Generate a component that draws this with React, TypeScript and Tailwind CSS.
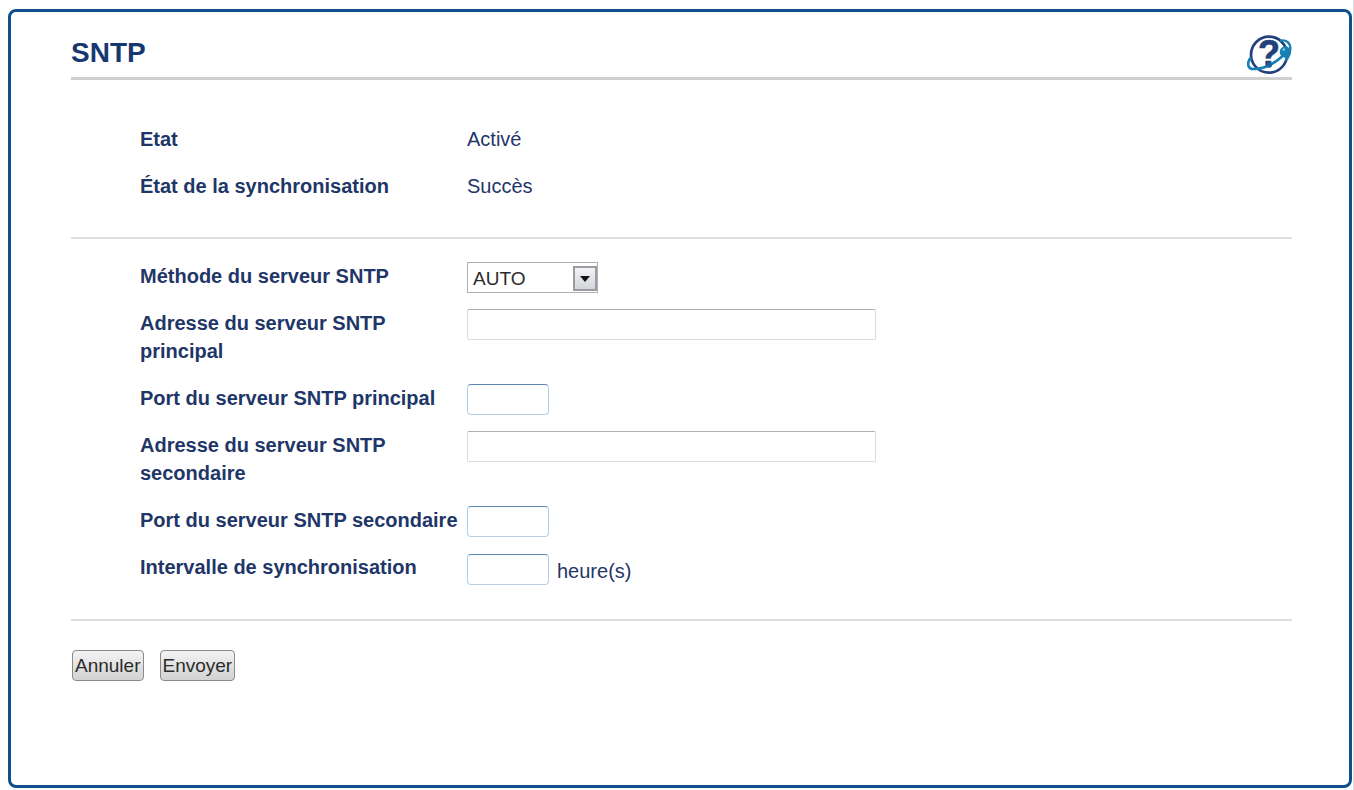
import React, { FC, ReactNode, useState } from 'react';

interface RowProps {
  label: string;
  htmlFor?: string;
  children: ReactNode;
}

const Row: FC<RowProps> = ({ label, htmlFor, children }) => {
  return (
    <div className="flex items-start">
      <div className="w-[327px] shrink-0 pb-[19px] font-bold">
        {htmlFor ? <label htmlFor={htmlFor}>{label}</label> : <span>{label}</span>}
      </div>
      <div className="flex min-w-0 grow items-center">{children}</div>
    </div>
  );
};

const HelpIcon: FC = () => {
  return (
    <svg viewBox="51 42 135 126" className="h-[42px] w-[45px]" aria-hidden="true">
      <circle cx="117" cy="104" r="54" fill="#fff" stroke="#22407b" strokeWidth="8" />
      <text x="117" y="138" textAnchor="middle" fontSize="108" fontWeight="bold" fontFamily="Liberation Sans, Arial, sans-serif" fill="#22407b" stroke="#22407b" strokeWidth="2">?</text>
      {/* orbit */}
      <path d="M63 112C48 130 54 148 72 147C104 146 138 128 162 104" fill="none" stroke="#1680b4" strokeWidth="8" />
      <path d="M150 62C168 58 182 68 181 88C180 102 174 114 167 122" fill="none" stroke="#1680b4" strokeWidth="7" />
      <circle cx="118" cy="135" r="8" fill="#1f5f9a" />
      <circle cx="166" cy="96" r="17" fill="#1680b4" />
      <circle cx="161" cy="89" r="4" fill="#7cc0e0" />
    </svg>
  );
};

const wideInput = "h-[31px] w-[409px] rounded-xs border border-[#dcdcdc] border-t-[#b0b0b0] bg-white px-1 outline-none";
const smallInput = "h-[31px] w-[82px] rounded-sm border border-[#b5cfe7] border-t-[#5f86b3] bg-white px-1 outline-none";
const button = "h-[31px] rounded-sm border border-[#8a8a8a] bg-linear-to-b from-[#f3f3f3] to-[#d2d2d2] px-[2px] text-[19px] text-[#2b2b2b]";

const App: FC = () => {
  const [method, setMethod] = useState('AUTO')

  return (
    <div className="flex min-h-screen border-r border-[#d5dbe3] bg-white pt-[9px] pr-px pb-[2px] pl-2 font-['Liberation_Sans',Arial,sans-serif] text-[20px] leading-[28px] text-[#1f3668]">
      <main className="grow rounded-lg border-3 border-[#10508a] pt-[22px] pr-[57px] pb-24 pl-[60px]">
        <header className="flex h-[46px] items-start justify-between border-b-3 border-[#d0d0d0]">
          <h1 className="pt-[5px] text-[28px] leading-[28px] font-bold text-[#17386f]">SNTP</h1>
          <a href="#aide" aria-label="Aide">
            <HelpIcon />
          </a>
        </header>

        <form onSubmit={(e) => e.preventDefault()}>
          <section className="border-b-2 border-[#dedede] pt-[45px] pb-[18px] pl-[69px]">
            <Row label="Etat">Activé</Row>
            <Row label="État de la synchronisation">Succès</Row>
          </section>

          <section className="border-b-2 border-[#dedede] pt-[23px] pb-[19px] pl-[69px]">
            <Row label="Méthode du serveur SNTP" htmlFor="method">
              <div className="relative">
                <select
                  id="method"
                  value={method}
                  onChange={(e) => setMethod(e.target.value)}
                  className="h-[31px] w-[131px] appearance-none border border-[#b0b0b0] bg-white pt-[2px] pl-[5px] text-[19px] text-[#2b2b2b] outline-none"
                >
                  <option>AUTO</option>
                  <option>STATIC</option>
                </select>
                <span className="pointer-events-none absolute top-1 right-px flex h-[25px] w-6 items-center justify-center border-2 border-[#9a9ba3] bg-linear-to-b from-[#f4f4f6] to-[#d4d5da]">
                  <svg viewBox="0 0 10 6" className="h-[6px] w-[10px]" aria-hidden="true">
                    <path d="M0 0H10L5 6Z" fill="#151515" />
                  </svg>
                </span>
              </div>
            </Row>
            <Row label="Adresse du serveur SNTP principal" htmlFor="primary-address">
              <input id="primary-address" type="text" className={wideInput} />
            </Row>
            <Row label="Port du serveur SNTP principal" htmlFor="primary-port">
              <input id="primary-port" type="text" className={smallInput} />
            </Row>
            <Row label="Adresse du serveur SNTP secondaire" htmlFor="secondary-address">
              <input id="secondary-address" type="text" className={wideInput} />
            </Row>
            <Row label="Port du serveur SNTP secondaire" htmlFor="secondary-port">
              <input id="secondary-port" type="text" className={smallInput} />
            </Row>
            <Row label="Intervalle de synchronisation" htmlFor="interval">
              <input id="interval" type="text" className={smallInput} />
              <span className="pt-1 pl-2">heure(s)</span>
            </Row>
          </section>

          <div className="flex gap-4 pt-[29px] pl-px">
            <button type="button" className={button}>Annuler</button>
            <button type="submit" className={button}>Envoyer</button>
          </div>
        </form>
      </main>
    </div>
  );
};

export default App;
